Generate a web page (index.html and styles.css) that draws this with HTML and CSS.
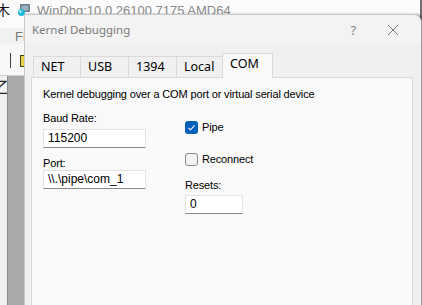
FILE: index.html
```html
<!DOCTYPE html>
<html>
<head>
	<title>Kernel Debugging</title>
	<meta content="width=device-width, initial-scale=1" name="viewport">
	<link rel="stylesheet" href="styles.css">
</head>
<body>
<div class="desktop">
	<!-- WinDbg main window, mostly hidden behind the dialog -->
	<div class="bg-window">
		<div class="bg-title">
			<span class="bg-glyph">木</span>
			<svg class="bg-icon" width="14" height="14" viewBox="0 0 14 14" aria-hidden="true">
				<rect x="3" y="1" width="10" height="8" rx="1" fill="#6b7a86"></rect>
				<rect x="4.5" y="2.5" width="7" height="5" fill="#9fb2c2"></rect>
				<circle cx="4.5" cy="9.5" r="3.5" fill="#22b8d8"></circle>
				<circle cx="3.5" cy="8.5" r="1.2" fill="#b8f0ff"></circle>
			</svg>
			<span class="bg-title-text">WinDbg:10.0.26100.7175 AMD64</span>
		</div>
		<div class="bg-menu"><span>File</span></div>
		<div class="bg-toolbar">
			<span class="bg-sep"></span>
			<span class="bg-tool"></span>
		</div>
		<div class="bg-client">
			<span class="bg-glyph2">乙</span>
			<div class="bg-gutter"></div>
		</div>
	</div>

	<div class="dialog">
		<div class="dialog-title">
			<span class="dialog-caption">Kernel Debugging</span>
			<span class="dialog-help">?</span>
			<svg class="dialog-close" width="12" height="12" viewBox="0 0 12 12" aria-hidden="true">
				<path d="M1 1 L11 11 M11 1 L1 11" stroke="#777" stroke-width="1" fill="none"></path>
			</svg>
		</div>
		<div class="dialog-body">
			<ul class="tabs">
				<li class="tab">NET</li>
				<li class="tab">USB</li>
				<li class="tab">1394</li>
				<li class="tab">Local</li>
				<li class="tab tab-active">COM</li>
			</ul>
			<div class="tab-panel">
				<p class="desc">Kernel debugging over a COM port or virtual serial device</p>
				<div class="fields">
					<div class="col col-left">
						<label class="label">Baud Rate:</label>
						<div class="input input-wide">115200</div>
						<label class="label label-port">Port:</label>
						<div class="input input-wide">\\.\pipe\com_1</div>
					</div>
					<div class="col col-right">
						<div class="check check-pipe">
							<span class="box box-on">
								<svg width="13" height="13" viewBox="0 0 13 13" aria-hidden="true">
									<path d="M3.5 6.8 L5.6 8.8 L9.6 4.4" stroke="#fff" stroke-width="1.1" fill="none"></path>
								</svg>
							</span>
							<span>Pipe</span>
						</div>
						<div class="check check-reconnect">
							<span class="box"></span>
							<span>Reconnect</span>
						</div>
						<label class="label label-resets">Resets:</label>
						<div class="input input-narrow">0</div>
					</div>
				</div>
			</div>
		</div>
	</div>
</div>
</body>
</html>
```

FILE: styles.css
```css
body {
	margin: 0;
	padding: 0;
	background: #fff;
	font-family: "Liberation Sans", Arial, sans-serif;
	font-size: 11px;
	color: #000;
}

.desktop {
	position: relative;
	width: 422px;
	height: 305px;
	overflow: hidden;
	background: #6f6f6f;
}

/* background window */
.bg-window {
	position: absolute;
	left: 0;
	top: 0;
	width: 420px;
	height: 305px;
	background: #fbfbfb;
	display: flex;
	flex-direction: column;
}

.bg-title {
	height: 28px;
	display: flex;
	align-items: flex-start;
	background: #fbfbfb;
	position: relative;
}

.bg-glyph {
	position: absolute;
	left: -4px;
	top: -1px;
	font-family: "Noto Sans CJK SC", sans-serif;
	font-size: 14px;
	color: #111;
}

.bg-icon {
	position: absolute;
	left: 17px;
	top: 3px;
}

.bg-title-text {
	position: absolute;
	left: 37px;
	top: 3px;
	font-family: "Liberation Sans", Arial, sans-serif;
	font-size: 13px;
	color: #8a8a8a;
}

.bg-menu {
	width: 24px;
	overflow: hidden;
	white-space: nowrap;
	height: 16px;
	background: #f2f2f2;
	padding-left: 15px;
	box-sizing: border-box;
	font-family: "Liberation Sans", Arial, sans-serif;
	font-size: 13px;
	line-height: 17px;
	color: #777;
}

.bg-toolbar {
	height: 31px;
	background: #f7f7f7;
	position: relative;
	border-bottom: 1px solid #d0d0d0;
}

.bg-sep {
	position: absolute;
	left: 10px;
	top: 9px;
	width: 1px;
	height: 15px;
	background: #444;
}

.bg-tool {
	position: absolute;
	left: 20px;
	top: 11px;
	width: 6px;
	height: 10px;
	background: #e8d24a;
	border: 1px solid #4a4210;
}

.bg-client {
	flex: 1;
	position: relative;
	background: #f1f1f1;
}

.bg-glyph2 {
	position: absolute;
	left: -6px;
	top: -2px;
	font-family: "Noto Sans CJK SC", sans-serif;
	font-size: 16px;
	color: #222;
}

.bg-gutter {
	position: absolute;
	left: 7px;
	top: 0;
	bottom: 0;
	width: 17px;
	background: #a9a9a9;
	border-left: 1px solid #8c8c8c;
}

/* dialog */
.dialog {
	position: absolute;
	left: 24px;
	top: 14px;
	width: 396px;
	height: 300px;
	background: #f0f0f0;
	border: 1px solid #c8c8c8;
	border-right-color: #9a9a9a;
	border-top-right-radius: 8px;
	box-shadow: 2px 0 2px rgba(0, 0, 0, 0.35);
	display: flex;
	flex-direction: column;
	font-family: "Liberation Sans", Arial, sans-serif;
	letter-spacing: -0.15px;
}

.dialog-title {
	height: 29px;
	background: #f3f3f3;
	display: flex;
	align-items: center;
	padding-left: 7px;
	border-top-right-radius: 8px;
}

.dialog-caption {
	flex: 1;
	font-family: "Noto Sans", sans-serif;
	font-size: 11.5px;
	letter-spacing: 0;
	color: #7a7a7a;
}

.dialog-help {
	font-family: "Noto Sans", sans-serif;
	font-size: 13px;
	color: #888;
	margin-right: 31px;
}

.dialog-close {
	margin-right: 22px;
}

.dialog-body {
	flex: 1;
	padding: 9px 8px 0 6px;
	display: flex;
	flex-direction: column;
}

.tabs {
	list-style: none;
	margin: 0;
	padding: 0 0 0 2px;
	display: flex;
	align-items: flex-end;
	height: 24px;
	position: relative;
	z-index: 1;
}

.tab {
	height: 21px;
	padding: 0 7px;
	font-family: "Noto Sans", sans-serif;
	font-size: 12.5px;
	letter-spacing: 0;
	line-height: 20px;
	background: #f0f0f0;
	border: 1px solid #dadada;
	border-bottom: none;
	border-right: none;
	box-sizing: border-box;
}

.tab:nth-child(1) { width: 47px; }
.tab:nth-child(2) { width: 48px; }
.tab:nth-child(3) { width: 48px; }
.tab:nth-child(4) { width: 47px; border-right: 1px solid #dadada; }

.tab-active {
	width: 51px;
	height: 25px;
	margin-left: -1px;
	margin-bottom: -1px;
	background: #f9f9f9;
	border-right: 1px solid #dadada;
	line-height: 19px;
}

.tab-panel {
	flex: 1;
	background: #f9f9f9;
	border: 1px solid #dadada;
	padding: 9px 11px;
}

.desc {
	margin: 0;
	line-height: 15px;
}

.fields {
	display: flex;
	margin-top: 9px;
}

.col {
	display: flex;
	flex-direction: column;
	align-items: flex-start;
}

.col-left {
	width: 142px;
}

.label {
	line-height: 15px;
}

.input {
	height: 19px;
	box-sizing: border-box;
	background: #fff;
	border: 1px solid #e3e3e3;
	border-bottom-color: #8a8a8a;
	padding: 0 4px;
	line-height: 17px;
	font-size: 12px;
	letter-spacing: 0;
}

.input-wide {
	width: 103px;
	margin-top: 3px;
}

.label-port {
	margin-top: 8px;
	margin-bottom: -4px;
}

.input-narrow {
	width: 58px;
	margin-top: 2px;
}

.check {
	display: flex;
	align-items: center;
	gap: 4px;
	line-height: 15px;
}

.check-pipe {
	margin-top: 9px;
}

.check-reconnect {
	margin-top: 17px;
}

.label-resets {
	margin-top: 11px;
}

.box {
	width: 13px;
	height: 13px;
	box-sizing: border-box;
	border: 1px solid #8a8a8a;
	border-radius: 3px;
	background: #f3f3f3;
	display: block;
}

.box-on {
	border: none;
	background: #005fb8;
}

.box-on svg {
	display: block;
}
```
